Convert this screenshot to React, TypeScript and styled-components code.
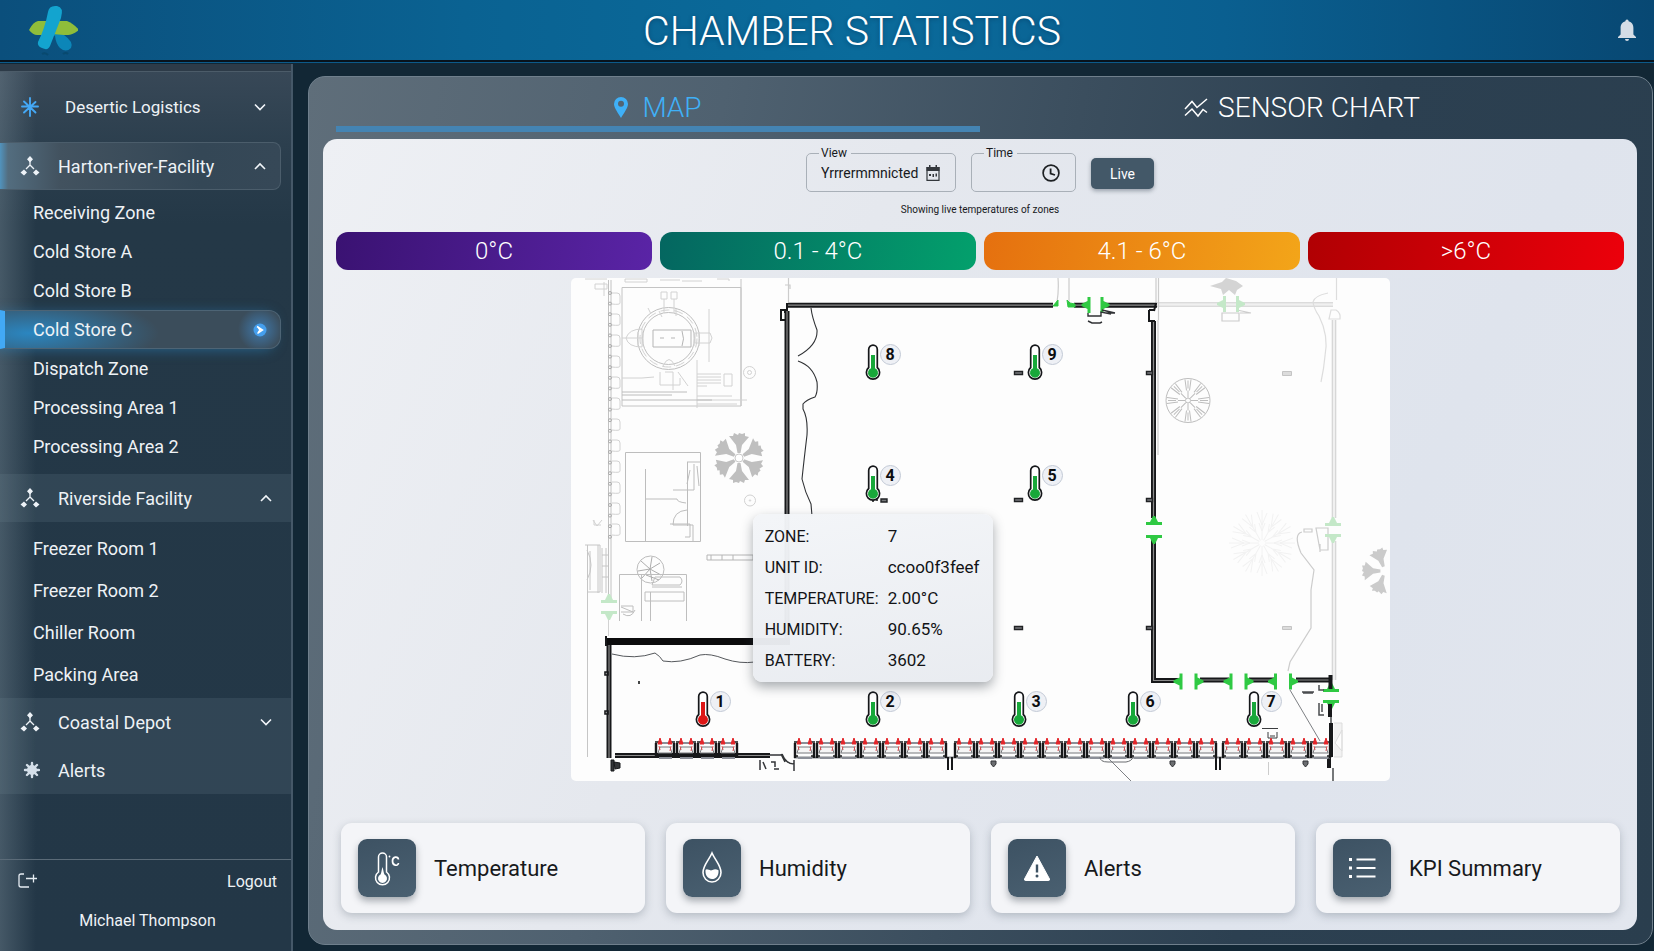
import React from "react";
import styled, { createGlobalStyle, css } from "styled-components";

const GlobalStyle = createGlobalStyle`
  *, *::before, *::after { box-sizing: border-box; }
  body {
    margin: 0;
    background: #122735;
    font-family: Roboto, "Liberation Sans", sans-serif;
    color: #eef2f6;
  }
  button, input { font: inherit; color: inherit; }
  button { border: 0; background: none; padding: 0; cursor: pointer; }
  a { color: inherit; text-decoration: none; }
  svg { display: block; flex: none; }
`;

/* ---------- shell ---------- */

const Page = styled.div`
  display: flex;
  flex-direction: column;
  min-height: 100vh;
`;

const Header = styled.header`
  display: flex;
  align-items: center;
  height: 64px;
  padding: 0 18px 4px 28px;
  background:
    linear-gradient(transparent 60px, #07131d 60px, #07131d 62px, #0c5a8a 62px, #0c5a8a 63px, #122735 63px),
    linear-gradient(90deg, #0b4f7c 0%, #0a6292 28%, #0a6b9b 52%, #0a5f90 74%, #084873 100%);
`;

const Title = styled.h1`
  flex: 1;
  margin: 0;
  padding: 2px 0 0 8px;
  text-align: center;
  font-size: 41px;
  line-height: 56px;
  font-weight: 300;
  color: #fff;
  text-shadow: 0 1px 4px rgba(0, 30, 60, 0.4);
  white-space: nowrap;
`;

const Body = styled.div`
  display: flex;
  flex: 1;
`;

/* ---------- sidebar ---------- */

const Sidebar = styled.aside`
  display: flex;
  flex-direction: column;
  flex: none;
  width: 293px;
  border-right: 2px solid #455868;
  background:
    linear-gradient(90deg, rgba(120, 138, 150, 0.4), rgba(120, 138, 150, 0) 36px),
    linear-gradient(180deg, #394958 0, #2c3f4e 80px, #243847 160px, #233747 100%);
  font-size: 18px;
`;

const Strip = styled.div`
  height: 8px;
  border-bottom: 1px solid #4c5c69;
  background: #2d3b48;
`;

const Nav = styled.nav`
  display: flex;
  flex-direction: column;
`;

type Tone = "plain" | "open" | "band";

const GroupButton = styled.button<{ $tone: Tone }>`
  display: flex;
  align-items: center;
  width: ${(p) => (p.$tone === "open" ? "281px" : "100%")};
  height: ${(p) => (p.$tone === "plain" ? 70 : 48)}px;
  padding: 0 ${(p) => (p.$tone === "band" ? 18 : p.$tone === "open" ? 13 : 24)}px 0 20px;
  text-align: left;
  ${(p) =>
    p.$tone === "plain" &&
    css`
      font-size: 17px;
    `}
  ${(p) =>
    p.$tone === "open" &&
    css`
      border: 1px solid #4b5d6b;
      border-left: 0;
      border-radius: 0 8px 8px 0;
      background: linear-gradient(90deg, #5193bd 0, #536d7f 8px, #42525f 60px, #344756 200px, #364857 100%);
    `}
  ${(p) =>
    p.$tone === "band" &&
    css`
      background: rgba(120, 140, 155, 0.17);
    `}
`;

const GroupLabel = styled.span<{ $indent?: boolean }>`
  flex: 1;
  padding-left: ${(p) => (p.$indent ? 25 : 18)}px;
  white-space: nowrap;
`;

const ZoneList = styled.ul<{ $roomy?: boolean }>`
  display: flex;
  flex-direction: column;
  margin: 0;
  padding: ${(p) => (p.$roomy ? "5px 0 3px" : "3px 0 8px")};
  list-style: none;
  a { height: ${(p) => (p.$roomy ? 42 : 39)}px; }
`;

const ZoneLink = styled.a<{ $active?: boolean }>`
  display: flex;
  align-items: center;
  justify-content: space-between;
  width: 281px;
  padding: 0 13px 0 33px;
  ${(p) =>
    p.$active &&
    css`
      padding-left: 28px;
      border: 1px solid #4d6475;
      border-left: 5px solid #42a9f5;
      border-radius: 0 12px 12px 0;
      background:
        radial-gradient(circle at 255px 50%, rgba(66, 150, 225, 0.6), transparent 22px),
        radial-gradient(ellipse 130px 36px at 24px 60%, #2b86c0, rgba(42, 120, 175, 0)),
        #3b4d5b;
      box-shadow: -6px 2px 12px rgba(42, 128, 184, 0.5);
    `}
`;

const Footer = styled.footer`
  margin-top: auto;
  height: 92px;
  border-top: 1px solid #5b6b78;
  font-size: 16px;
`;

const Logout = styled.button`
  display: flex;
  align-items: center;
  justify-content: space-between;
  width: 100%;
  height: 42px;
  padding: 0 14px 0 18px;
`;

const UserName = styled.p`
  margin: 0;
  padding-left: 4px;
  text-align: center;
  line-height: 38px;
`;

/* ---------- main panel ---------- */

const Main = styled.main`
  display: flex;
  flex: 1;
  min-width: 0;
  padding: 12px 1px 6px 15px;
`;

const Panel = styled.div`
  display: flex;
  flex-direction: column;
  flex: 1;
  min-width: 0;
  padding: 0 15px 14px 14px;
  border: 1px solid #6f7f8c;
  border-radius: 17px;
  background: linear-gradient(100deg, #5f6e7a 0%, #4f6170 28%, #3b4e5e 52%, #2c4051 72%, #2a3e4e 100%);
`;

const Tabs = styled.div`
  display: grid;
  grid-template-columns: 1fr 1fr;
  height: 62px;
  padding: 0 13px 7px;
`;

const Tab = styled.button<{ $active?: boolean }>`
  display: flex;
  align-items: center;
  justify-content: center;
  gap: ${(p) => (p.$active ? 14 : 10)}px;
  padding-top: ${(p) => (p.$active ? 12 : 7)}px;
  border-bottom: ${(p) => (p.$active ? "6px solid #4484b3" : "0")};
  font-size: 28px;
  line-height: 36px;
  font-weight: 300;
  color: ${(p) => (p.$active ? "#3fb0f7" : "#fff")};
`;

const Sheet = styled.section`
  display: flex;
  flex-direction: column;
  flex: 1;
  padding: 7px 13px 17px;
  border-radius: 14px;
  background: linear-gradient(115deg, #eef0f4 0%, #e5e8ee 35%, #dfe4ed 75%, #e2e6ee 100%);
  color: #17191c;
`;

const Controls = styled.form`
  display: flex;
  justify-content: center;
  gap: 15px;
`;

const Field = styled.fieldset<{ $w: number }>`
  display: flex;
  align-items: center;
  width: ${(p) => p.$w}px;
  height: 46px;
  min-width: 0;
  margin: 0;
  padding: 0 15px 6px 12px;
  border: 1px solid #a9b0b8;
  border-radius: 5px;
  legend { padding: 0 4px 0 2px; font-size: 12px; line-height: 14px; }
  input {
    flex: 1;
    min-width: 0;
    width: 0;
    padding: 0 0 0 2px;
    border: 0;
    outline: 0;
    background: transparent;
    font-size: 14px;
    line-height: 24px;
  }
`;

const LiveButton = styled.button`
  width: 63px;
  height: 31px;
  margin-top: 12px;
  border-radius: 5px;
  background: #435868;
  color: #fff;
  font-size: 14px;
  box-shadow: 0 2px 4px rgba(40, 55, 70, 0.4);
`;

const Caption = styled.p`
  margin: 10px 0 14px;
  text-align: center;
  font-size: 10px;
  line-height: 16px;
`;

const Legend = styled.ul`
  display: grid;
  grid-template-columns: repeat(4, 1fr);
  gap: 8px;
  margin: 0 0 8px;
  padding: 0;
  list-style: none;
`;

const Range = styled.li<{ $from: string; $to: string }>`
  height: 38px;
  border-radius: 12px;
  background: linear-gradient(100deg, ${(p) => p.$from}, ${(p) => p.$to});
  color: #fff;
  font-size: 24px;
  font-weight: 300;
  line-height: 38px;
  text-align: center;
`;

const MapFrame = styled.div`
  position: relative;
  width: 100%;
  max-width: 819px;
  margin: 0 auto 42px;
  border-radius: 5px;
  background: #fdfdfd;
`;

const Pin = styled.button<{ $x: number; $y: number }>`
  position: absolute;
  left: ${(p) => ((p.$x - 571) / 819) * 100}%;
  top: ${(p) => ((p.$y - 278) / 503) * 100}%;
  display: flex;
  align-items: flex-start;
  margin-left: -8px;
`;

const Badge = styled.span`
  width: 21px;
  height: 21px;
  margin-left: -1px;
  border: 1px solid #c3cad6;
  border-radius: 50%;
  background: #eef0f5;
  color: #0c0d0f;
  font-size: 16px;
  font-weight: 700;
  line-height: 19px;
  text-align: center;
`;

const Tooltip = styled.dl`
  position: absolute;
  left: calc(22% + 2px);
  top: 47%;
  display: grid;
  grid-template-columns: 123px auto;
  width: 240px;
  margin: 0;
  padding: 7px 12px 6px;
  border-radius: 9px;
  background: linear-gradient(170deg, rgba(243, 245, 248, 0.97), rgba(232, 235, 240, 0.96));
  box-shadow: 0 5px 12px rgba(40, 50, 60, 0.4);
  color: #121316;
  font-size: 17px;
  line-height: 31px;
  white-space: nowrap;
  dt { font-size: 16px; }
  dd { margin: 0; }
`;

const Cards = styled.div`
  display: grid;
  grid-template-columns: repeat(4, 1fr);
  gap: 21px;
  margin-top: auto;
  padding: 0 4px 0 5px;
`;

const Card = styled.button`
  display: flex;
  align-items: center;
  gap: 18px;
  height: 90px;
  padding: 0 17px;
  border-radius: 11px;
  background: #f4f5f8;
  box-shadow: 0 3px 8px rgba(60, 75, 90, 0.28);
  font-size: 22px;
`;

const CardIcon = styled.span`
  display: grid;
  place-items: center;
  width: 58px;
  height: 58px;
  border-radius: 9px;
  background: linear-gradient(160deg, #3d5263, #4a6071);
  box-shadow: 0 4px 7px rgba(50, 60, 70, 0.4);
`;

/* ---------- icons ---------- */

const Logo = () => (
  <svg width="50" height="52" viewBox="0 0 50 52" aria-hidden="true">
    <path d="M1 26 Q5 18 10 17 H39 Q45 19 51 26 Q44 31 40 31 H9 Q5 31 1 26Z" fill="#8fbd3a" />
    <path d="M24 30 L36 31 Q46 38 43 44 Q38 49 32 44 Q28 40 27 32Z" fill="#0c86b8" />
    <path d="M20 8 Q21 1 29 2 Q36 3 33 14 L22 42 Q20 47 14 44 Q9 42 10 38 Q17 24 20 8Z" fill="#13a4cf" />
    <path d="M14 50 q3-2 6 1 M35 50 q3-2 5 0" stroke="#08496f" strokeWidth="2" fill="none" />
  </svg>
);

const Bell = () => (
  <svg width="18" height="22" viewBox="0 0 18 22" aria-hidden="true">
    <path d="M9 0.5a1.6 1.6 0 0 1 1.6 1.7C14 3 15.4 6 15.4 9v6.5L18 18v1H0v-1l2.6-2.5V9C2.6 6 4 3 7.4 2.2A1.6 1.6 0 0 1 9 .5ZM7 20h4a2 2 0 0 1-4 0Z" fill="#d5dde6" />
  </svg>
);

const Snow = () => (
  <svg width="20" height="20" viewBox="0 0 20 20" stroke="#44a8f5" strokeWidth="1.900" strokeLinecap="round" aria-hidden="true">
    <path d="M10 1v18M2 9.500h16M4 4.500l11.500 11M15.500 5L4 15.500" />
  </svg>
);

const Tree = () => (
  <svg width="20" height="20" viewBox="0 0 20 20" fill="#eef3f8" aria-hidden="true">
    <path d="M10 0l3 3.200-3 3.200-3-3.200zM4 13.500l3 3.100L4 19.500l-3.500-2.900zM16 13.500l3.500 3.100L16 19.500l-3-2.900z" />
    <path d="M10 5v5M10 9l-4 4M10 9l4 4" stroke="#eef3f8" strokeWidth="1.300" fill="none" />
  </svg>
);

const Burst = () => (
  <svg width="20" height="20" viewBox="-12 -10 20 20" aria-hidden="true">
    <g stroke="#d4dfe9" strokeWidth="2.400" strokeLinecap="round">
      <path d="M0-7V7M-7 0H7M-5-5L5 5M5-5L-5 5" />
    </g>
    <circle r="5" fill="#d4dfe9" />
  </svg>
);

const Chevron = ({ up }: { up?: boolean }) => (
  <svg width="14" height="14" viewBox="0 0 14 14" fill="none" stroke="#f2f6fa" strokeWidth="1.600" aria-hidden="true">
    <path d={up ? "M2 10L7 5l5 5" : "M2 4.500L7 9.500l5-5"} />
  </svg>
);

const GoDot = () => (
  <svg width="14" height="14" viewBox="0 0 14 14" aria-hidden="true">
    <circle cx="7" cy="7" r="6.500" fill="#459fee" />
    <path d="M4 3.500L9.500 7 4.500 10.500M5 4l2 3-2 3" stroke="#fff" strokeWidth="1.500" fill="none" />
  </svg>
);

const LogoutIcon = () => (
  <svg width="20" height="16" viewBox="0 0 20 16" fill="none" stroke="#e6edf3" strokeWidth="1.300" aria-hidden="true">
    <path d="M6 1H3Q1 1 1 3v9q0 2 2 2h8M8 5.500h11M15.500 1.500v8" />
  </svg>
);

const PinIcon = () => (
  <svg width="14" height="21" viewBox="0 0 14 21" aria-hidden="true">
    <path fillRule="evenodd" d="M7 0a7 7 0 0 1 7 7c0 4-4.500 9.500-7 14C4.500 16.500 0 11 0 7a7 7 0 0 1 7-7Zm0 3.800a3 3 0 1 0 0 6 3 3 0 0 0 0-6Z" fill="#3fb0f7" />
  </svg>
);

const WaveIcon = () => (
  <svg width="24" height="20" viewBox="0 0 24 20" fill="none" stroke="#fff" strokeWidth="1.500" aria-hidden="true">
    <path d="M1 11L8 3.500l5 6L23 1M1 17.500L8 11l6 7 5-6.500 4 3" />
  </svg>
);

const CalendarIcon = () => (
  <svg width="14" height="16" viewBox="0 0 14 16" aria-hidden="true">
    <path d="M1 2.500h12v12.800H1z" fill="none" stroke="#33373c" strokeWidth="1.200" />
    <path d="M.5 2h13v4H.5zM3 0h1.500v3H3zM9.500 0H11v3H9.500z" fill="#33373c" />
    <path d="M3 9h2v2H3zM6.500 9H8v3H6.500zM9.500 8.500H11v3H9.500z" fill="#33373c" />
  </svg>
);

const ClockIcon = () => (
  <svg width="18" height="18" viewBox="0 0 18 18" fill="none" stroke="#1d2023" aria-hidden="true">
    <circle cx="9" cy="9" r="7.900" strokeWidth="1.700" />
    <path d="M8.600 4.500v5l4.400 1.500" strokeWidth="1.800" />
  </svg>
);

const TempIcon = () => (
  <svg width="26" height="36" viewBox="0 0 26 36" aria-hidden="true">
    <path d="M4.500 21V6a4 4 0 0 1 8 0v15a7 7 0 1 1-8 0Z" transform="translate(0 1)" fill="none" stroke="#fff" strokeWidth="1.500" />
    <path d="M8.500 17c1 3 1 6 2 7.500a4.500 4.500 0 1 1-4 0C7.500 23 7.500 20 8.500 17Z" fill="#fff" />
    <path d="M24.500 9.500C24 6 18.500 6 18.500 11s5.500 5.500 6 2" fill="none" stroke="#fff" strokeWidth="1.700" />
    <circle cx="15.500" cy="6.500" r=".9" fill="#fff" />
  </svg>
);

const DropIcon = () => (
  <svg width="24" height="34" viewBox="0 0 24 34" aria-hidden="true">
    <path d="M12 2c3 7 9 12.500 9 19.500a9 9.500 0 0 1-18 0C3 14.500 9 9 12 2Z" fill="none" stroke="#fff" strokeWidth="1.600" />
    <path d="M5.500 19c2-2 4 1.500 7 0 2-1.200 4-1 6 .2C19 25 16 28 12 28s-7-3.500-6.500-9Z" fill="#fff" />
  </svg>
);

const WarnIcon = () => (
  <svg width="28" height="28" viewBox="0 0 28 28" aria-hidden="true">
    <path d="M14 2 26.500 25q.5 1.500-1.500 1.500H3Q1 26.500 1.500 25Z" fill="#fff" stroke="#fff" strokeLinejoin="round" />
    <path d="M14 10.500v8" stroke="#3d5263" strokeWidth="2.400" />
    <circle cx="14" cy="22" r="1.500" fill="#3d5263" />
  </svg>
);

const ListIcon = () => (
  <svg width="28" height="24" viewBox="0 0 28 24" fill="none" stroke="#fff" aria-hidden="true">
    <path d="M1 3.500h3M1 12h3M1 20.500h3" strokeWidth="3" />
    <path d="M8.500 3.500H27.500M8.500 12H27.500M8.500 20.500H27.500" strokeWidth="1.800" />
  </svg>
);

const Thermometer = ({ hot }: { hot?: boolean }) => {
  const color = hot ? "#dd1616" : "#18a83a";
  return (
    <svg width="16" height="37" viewBox="0 0 16 37" aria-hidden="true">
      <path d="M3.700 23.500V5.500a4.300 4.300 0 0 1 8.600 0v18a6.600 6.600 0 1 1-8.600 0Z" fill="#fff" stroke="#15171a" strokeWidth="1.700" />
      <path d="M6 11h4v13.200a5 5 0 1 1-4 0Z" fill={color} />
    </svg>
  );
};

/* ---------- floor plan ---------- */

const WALL = "#17181a";
const FAINT = "#d2d2d2";
const DOOR = "#2fc943";

const Wall = ({ d }: { d: string }) => (
  <g fill="none">
    <path d={d} stroke={WALL} strokeWidth="5" />
    <path d={d} stroke="#8b8b8b" strokeWidth="1.200" />
  </g>
);

const PaleWall = ({ d }: { d: string }) => (
  <g fill="none">
    <path d={d} stroke="#cfcfcf" strokeWidth="4.500" />
    <path d={d} stroke="#f0f0f0" strokeWidth="2.500" />
  </g>
);

/* A pair of door jambs, facing each other across an opening */
const DoorPair = ({ x, y, gap = 12, turn = 0, pale }: { x: number; y: number; gap?: number; turn?: number; pale?: boolean }) => (
  <g transform={`translate(${x} ${y}) rotate(${turn})`} fill={pale ? "#c4e8c8" : DOOR}>
    {[1, -1].map((s) => (
      <path key={s} transform={`scale(${s} 1)`} d={`M${gap / 2} -8h3v4l4 2 2 1v2l-2 1-4 2v4h-3z`} />
    ))}
  </g>
);

const Fan = ({ x, y, r, angles, fill }: { x: number; y: number; r: number; angles: number[]; fill: string }) => (
  <g transform={`translate(${x} ${y})`} fill={fill}>
    {angles.map((a) => (
      <path
        key={a}
        transform={`rotate(${a}) scale(${r / 25})`}
        d="M-1.500-5L-3-13-10-22-6-22-5-25-1-23 0-25 3-24 6-25 6-22 10-21 3-13 1.500-5z"
      />
    ))}
  </g>
);

const Dock = ({ x, w }: { x: number; w: number }) => (
  <g transform={`translate(${x} 738)`}>
    <path d={`M1 5V20M${w - 2} 5V20`} stroke={WALL} strokeWidth="2.400" />
    <path d={`M3 5H${w - 4}M4 20H${w - 4}`} stroke="#8b8f98" strokeWidth="1.800" />
    <path d={`M5 9H${w - 6}L${w - 4} 15H3Z`} fill="#f6f6f6" stroke="#77797c" strokeWidth="1" />
    <path d={`M0 4h5M${w - 6} 4h5M0 18h4M${w - 5} 18h4`} stroke={WALL} strokeWidth="1.600" />
    <path d={`M5 0l2 6h-4zM${w - 6} 0l2 6h-4z`} fill="#e3262b" stroke="#e3262b" />
    <path d={`M4 8l1 4M${w - 5} 8l-1 5`} stroke="#d9484c" strokeWidth="1" />
  </g>
);

const docks: [number, number, number][] = [
  [655, 4, 21],
  [794, 7, 22],
  [954, 12, 22],
  [1222, 5, 22],
];

const range = (n: number) => Array.from({ length: n }, (_, i) => i);

const FloorPlan = () => (
  <svg viewBox="571 278 819 503" width="100%" role="img" aria-label="Chamber floor plan" fill="none">
    {/* faded yard on the left */}
    <g stroke={FAINT} strokeWidth="1">
      <path d="M608.500 280V600M611 280V600" stroke="#c2c2c2" />
      {range(12).map((i) => (
        <path key={i} d={`M612 ${293 + i * 21}h5q3 0 3 3v7q0 2-8 1`} />
      ))}
      {range(24).map((i) => (
        <circle key={i} cx="610" cy={293 + i * 10.600} r="1.500" stroke="#ababab" />
      ))}
      <path d="M585 279h22M595 284h12v5h-12zM604 282v14M625 279h22v3h-22zM660 280h20M682 281h20M717 279h12v2" />
      <path d="M622 287.500H741V406H622zM741 279V406" stroke="#c4c4c4" />
      <circle cx="668.500" cy="338.500" r="31" stroke="#bfbfbf" />
      <circle cx="668.500" cy="338.500" r="26" stroke="#bfbfbf" />
      <circle cx="668.500" cy="338.500" r="28.500" strokeDasharray="9 5" />
      <path d="M653 330h38v17h-38zM682 331q3 8 0 15M660 338h4M671 338h4" stroke="#b5b5b5" />
      <path d="M622 338h20v9q-14 0-16-9q3-9 16-9v9M695 333h15l2 5-2 5h-15zM709 309v53M638 332v14M643 332v14M694 332v14M699 332v14" />
      <path d="M661 292h6v7h-6zM671 292h6v7h-6zM664 299v14M674 299v14M648 308l3 6M662 317l-3-6M676 316v-7" />
      <path d="M660 372v13h20v-7M663 366q6-13 12 0M665 372h8v18M678 372l10 14M697 360v48M622 378h20l12-1" />
      <path d="M697 374h24M697 377h24M697 380h24M697 383h24M697 386h10M724 374h8v12h-8zM697 396h35M697 400h50M697 404h40" />
      <path d="M622 392h65M622 395h50M622 400h90" stroke="#bcbcbc" />
      <circle cx="749.500" cy="372.500" r="6" />
      <circle cx="749.500" cy="372.500" r="2" />
      <circle cx="750" cy="500.500" r="5.500" />
      <circle cx="750" cy="500.500" r=".7" />
      <path d="M625.500 452.500H700.500V541.500H625.500zM645.500 469V541M687 462h13M687.500 462V526M694 464V490M673 490h21M645 499h32q0 3 9 4M687 510q-14 1-14 15h20v16M690 470l-3 14M697 466l2 20M670 524h20v13h-5" stroke="#bdbdbd" />
      <path d="M593 520l4 6 5-6M594 520v5h7" />
      <path d="M587.500 545V757M585 545h15v47h-13M598 545v48M602 548v45M606 548v45M602 555h6M602 566h6M602 577h6M587 550q8 15 0 30M590 551v39" stroke="#c6c6c6" />
      <circle cx="650.500" cy="569.500" r="13.500" stroke="#bcbcbc" />
      <path d="M650 569l-9-8M650 569l2-12M650 569l10-6M650 569l11 6M650 569l2 12M650 569l-8 9M650 569l-12 2M646 575l13 5" stroke="#adadad" />
      <path d="M619.500 621V574.500H686.500V621M641.500 574V621M650.500 592V621M645 592h39v9h-39zM655 577h25q4 4 0 8h-28zM652 587h30M621 606h12v6h-12M623 614q8 5 12-4M621 607l12 5" stroke="#bebebe" />
      <path d="M707 555h46v5h-46zM711 555v5M722 555v5M733 555v5" stroke="#b6b6b6" />
      <path d="M608.500 618V636" />
    </g>
    <Fan x={739} y={458} r={25} angles={[0, 60, 120, 180, 240, 300]} fill="#bfbfbf" />
    <circle cx="739" cy="458" r="4" stroke="#c9c9c9" fill="#fff" />
    <DoorPair x={609} y={607} gap={8} turn={90} pale />

    {/* faded annex on the right */}
    <PaleWall d="M1157 304.500H1333" />
    <PaleWall d="M1334 320V518M1334 541V680" />
    <g stroke="#cccccc" strokeWidth="1.200">
      <path d="M788.500 278V302M785 285h5v4M1057 302q2-12 1-24M1069 278v24M1156 278V302M1158.500 278V320M1158 320V455" />
      <path d="M1336.500 278V300M1331 310h5q5 3 4 9h-11zM1328 293q-14 3-15 9 1 7 6 14 10 20 6 40-1 12-4 26" stroke="#dddddd" />
      <path d="M1222 313h17v8h-17zM1237 310l14 3M1240 313h10" />
      <path d="M1316 528h12v22h-8zM1320 544v8M1304 529h8v3h-8z" />
      <path d="M1302 532Q1293 534 1301 553L1314 570 1311 590 1311 628 1290 662 1288 671" />
    </g>
    <path d="M1210 286l12-4 4-4 10 3 7 5-6 4-2 5-6-5-6 5-2-6z" fill="#d4d4d4" />
    <DoorPair x={1231} y={304} gap={10} pale />
    <DoorPair x={1333} y={530} gap={8} turn={90} pale />
    <g transform="translate(1188 400.5)" stroke="#bdbdbd">
      <circle r="22" />
      <circle r="2.500" />
      {range(8).map((i) => (
        <path key={i} transform={`rotate(${i * 45})`} d="M0-3V-10M-1.500-10L-3-21M1.500-10L3-21M0-12V-20" />
      ))}
    </g>
    <g transform="translate(1262 543)" stroke="#f2f2f2">
      {range(12).map((i) => (
        <path key={i} transform={`rotate(${i * 30})`} d="M0-3V-33M-5-31L0-18 5-30M-3-20L0-12 3-20" />
      ))}
    </g>
    <Fan x={1385} y={571} r={23} angles={[200, 270, 340]} fill="#cbcbcb" />
    <g fill="#dcdcdc" stroke="#c4c4c4">
      <path d="M1282.500 371.500h9v4h-9zM1282.500 626.500h9v3h-9z" />
    </g>

    {/* chamber walls */}
    <Wall d="M788 305.200H1053M1074 305.200H1086M1104 305.200H1157" />
    <Wall d="M787 311V640" />
    <Wall d="M1153.500 321V518M1153.500 540V680.500H1181M1200 680H1229M1249 680H1277M1296 680H1332" />
    <Wall d="M609 645V758" />
    <path d="M607 641.500H790" stroke="#0c0c0d" strokeWidth="7" />
    <path d="M606 636v10M787 303v8M785 310h-4v10h5M780 310h5v3M1149 310h6M1149 310v11h6M1156 303l-2 8" stroke={WALL} strokeWidth="2" />
    <path d="M811 308Q812 317 817 330 818 345 798 356M798 361Q813 366 817 382 818 392 815 397 806 400 803 404L803 409Q808 418 807 435 804 460 802 479 805 492 811 504L812 516" stroke="#303235" strokeWidth="1.100" />
    <path d="M612 654Q635 660 655 653 660 656 663 661 680 664 700 655 710 653 725 659 740 664 755 662" stroke="#55585c" />
    <path d="M605 672h3v3h-3zM605 711h3v3h-3zM639 681v3" stroke={WALL} strokeWidth="1.600" />
    <g fill="#77797c" stroke="#202224" strokeWidth="1.400">
      {[373, 500, 628].map((y) => (
        <path key={y} d={`M1014.500 ${y - 1.500}h8v3h-8zM1146.500 ${y - 1.500}h6v3h-6z`} />
      ))}
      <path d="M881 499h6v3h-6z" />
    </g>
    <path d="M873 500v2M877 499v2" stroke={WALL} strokeWidth="1.500" />

    {/* doors */}
    <path d="M1053 306l5-6v6zM1067 300l3 3 5 1v3h-7z" fill={DOOR} stroke={DOOR} />
    <DoorPair x={1095.500} y={305} gap={10} />
    <path d="M1088 313v3h13v-4l10 2M1102 310l13 3M1088 321l4 2h8l2-1M1104 313h11" stroke="#303235" strokeWidth="1.400" />
    <DoorPair x={1154} y={530} gap={10} turn={90} />
    <DoorPair x={1188.500} y={681.500} gap={12} />
    <DoorPair x={1238.500} y={681.500} gap={12} />
    <DoorPair x={1283} y={681.500} gap={12} />
    <DoorPair x={1331} y={696} gap={8} turn={90} />

    {/* right-hand corner */}
    <path d="M1330.500 675v14M1330 704v13M1331 723v34M1329 757v11" stroke={WALL} strokeWidth="4" />
    <path d="M1331 717v6M1333 768v13M1319 703v12h5M1319 685v5h5M1322 704v8M1302 692h12M1303 693h10" stroke="#4a4c4f" strokeWidth="1.500" />
    <path d="M1334 723h8v34h-8M1342 730l-7 13 7 8z" stroke="#dddddd" fill="#f2f2f2" />
    <path d="M1290 690L1320 741M1107 757L1131 781" stroke="#7d8084" />
    <path d="M1262 728.500h16M1268 732v6h9v-6M1270 736h5" stroke="#3a3c3f" />
    <path d="M1268.500 762v13" stroke="#cccccc" />

    {/* loading docks */}
    <Wall d="M615 755.500H770" />
    <path d="M770 755h11M782 754q4 10 12 10M781 754l4 8M794 760v11M760 760v10M763 762l3 7M771 762h4v5M774 769h5" stroke="#333538" strokeWidth="1.500" />
    <path d="M611 760h3v11h-3zM614 762l6 1v5l-5 1z" fill="#333538" stroke={WALL} />
    <path d="M794 757.500H1330" stroke="#84878b" strokeWidth="2" />
    {docks.map(([x, n, w]) => range(n).map((i) => <Dock key={`${x}-${i}`} x={x + i * w} w={w} />))}
    <path d="M655 755.500H737" stroke={WALL} strokeWidth="2" />
    <path d="M948 757v13M952 757v13M1216 757v13M1220 757v13" stroke={WALL} strokeWidth="2" />
    <g fill="#6b6d70" stroke="#333538">
      {[993, 1172, 1305].map((x) => (
        <path key={x} d={`M${x - 2} 761h5v3l-2.500 3-2.500-3z`} />
      ))}
    </g>
    <path d="M1100 757q0 5 8 5h18q6-1 7-5" stroke="#6b6d70" />
  </svg>
);

/* ---------- data ---------- */

const hartonZones = ["Receiving Zone", "Cold Store A", "Cold Store B", "Cold Store C", "Dispatch Zone", "Processing Area 1", "Processing Area 2"];
const riversideZones = ["Freezer Room 1", "Freezer Room 2", "Chiller Room", "Packing Area"];

const ranges = [
  { label: "0°C", from: "#3a1272", to: "#5a24a6" },
  { label: "0.1 - 4°C", from: "#046660", to: "#03a06c" },
  { label: "4.1 - 6°C", from: "#e5700f", to: "#f3a519" },
  { label: ">6°C", from: "#b00003", to: "#ec000b" },
];

const sensors = [
  { id: 8, x: 873, y: 344 },
  { id: 9, x: 1035, y: 344 },
  { id: 4, x: 873, y: 465 },
  { id: 5, x: 1035, y: 465 },
  { id: 1, x: 703, y: 691, hot: true },
  { id: 2, x: 873, y: 691 },
  { id: 3, x: 1019, y: 691 },
  { id: 6, x: 1133, y: 691 },
  { id: 7, x: 1254, y: 691 },
];

const reading = [
  ["ZONE:", "7"],
  ["UNIT ID:", "ccoo0f3feef"],
  ["TEMPERATURE:", "2.00°C"],
  ["HUMIDITY:", "90.65%"],
  ["BATTERY:", "3602"],
];

const cards = [
  { label: "Temperature", icon: <TempIcon /> },
  { label: "Humidity", icon: <DropIcon /> },
  { label: "Alerts", icon: <WarnIcon /> },
  { label: "KPI Summary", icon: <ListIcon /> },
];

const Zones = ({ names, roomy, active }: { names: string[]; roomy?: boolean; active?: string }) => (
  <ZoneList $roomy={roomy}>
    {names.map((name) => (
      <li key={name}>
        <ZoneLink href="#" $active={name === active} aria-current={name === active ? "page" : undefined}>
          {name}
          {name === active && <GoDot />}
        </ZoneLink>
      </li>
    ))}
  </ZoneList>
);

export default function App() {
  return (
    <Page>
      <GlobalStyle />
      <Header>
        <Logo />
        <Title>CHAMBER STATISTICS</Title>
        <button aria-label="Notifications"><Bell /></button>
      </Header>
      <Body>
        <Sidebar>
          <Strip />
          <Nav>
            <GroupButton $tone="plain">
              <Snow />
              <GroupLabel $indent>Desertic Logistics</GroupLabel>
              <Chevron />
            </GroupButton>
            <GroupButton $tone="open" aria-expanded>
              <Tree />
              <GroupLabel>Harton-river-Facility</GroupLabel>
              <Chevron up />
            </GroupButton>
            <Zones names={hartonZones} active="Cold Store C" />
            <GroupButton $tone="band" aria-expanded>
              <Tree />
              <GroupLabel>Riverside Facility</GroupLabel>
              <Chevron up />
            </GroupButton>
            <Zones names={riversideZones} roomy />
            <GroupButton $tone="band">
              <Tree />
              <GroupLabel>Coastal Depot</GroupLabel>
              <Chevron />
            </GroupButton>
            <GroupButton $tone="band">
              <Burst />
              <GroupLabel>Alerts</GroupLabel>
            </GroupButton>
          </Nav>
          <Footer>
            <Logout>
              <LogoutIcon />
              Logout
            </Logout>
            <UserName>Michael Thompson</UserName>
          </Footer>
        </Sidebar>
        <Main>
          <Panel>
            <Tabs role="tablist">
              <Tab role="tab" aria-selected $active><PinIcon />MAP</Tab>
              <Tab role="tab" aria-selected={false}><WaveIcon />SENSOR CHART</Tab>
            </Tabs>
            <Sheet>
              <Controls onSubmit={(e) => e.preventDefault()}>
                <Field $w={150}>
                  <legend><label htmlFor="view">View</label></legend>
                  <input id="view" type="text" defaultValue="Yrrrermmnicted" />
                  <CalendarIcon />
                </Field>
                <Field $w={105}>
                  <legend><label htmlFor="time">Time</label></legend>
                  <input id="time" type="text" />
                  <ClockIcon />
                </Field>
                <LiveButton type="submit">Live</LiveButton>
              </Controls>
              <Caption>Showing live temperatures of zones</Caption>
              <Legend>
                {ranges.map((r) => (
                  <Range key={r.label} $from={r.from} $to={r.to}>{r.label}</Range>
                ))}
              </Legend>
              <MapFrame>
                <FloorPlan />
                {sensors.map((s) => (
                  <Pin key={s.id} $x={s.x} $y={s.y} aria-label={`Sensor ${s.id}`}>
                    <Thermometer hot={s.hot} />
                    <Badge>{s.id}</Badge>
                  </Pin>
                ))}
                <Tooltip>
                  {reading.map(([name, value]) => (
                    <React.Fragment key={name}>
                      <dt>{name}</dt>
                      <dd>{value}</dd>
                    </React.Fragment>
                  ))}
                </Tooltip>
              </MapFrame>
              <Cards>
                {cards.map((c) => (
                  <Card key={c.label}>
                    <CardIcon>{c.icon}</CardIcon>
                    {c.label}
                  </Card>
                ))}
              </Cards>
            </Sheet>
          </Panel>
        </Main>
      </Body>
    </Page>
  );
}
